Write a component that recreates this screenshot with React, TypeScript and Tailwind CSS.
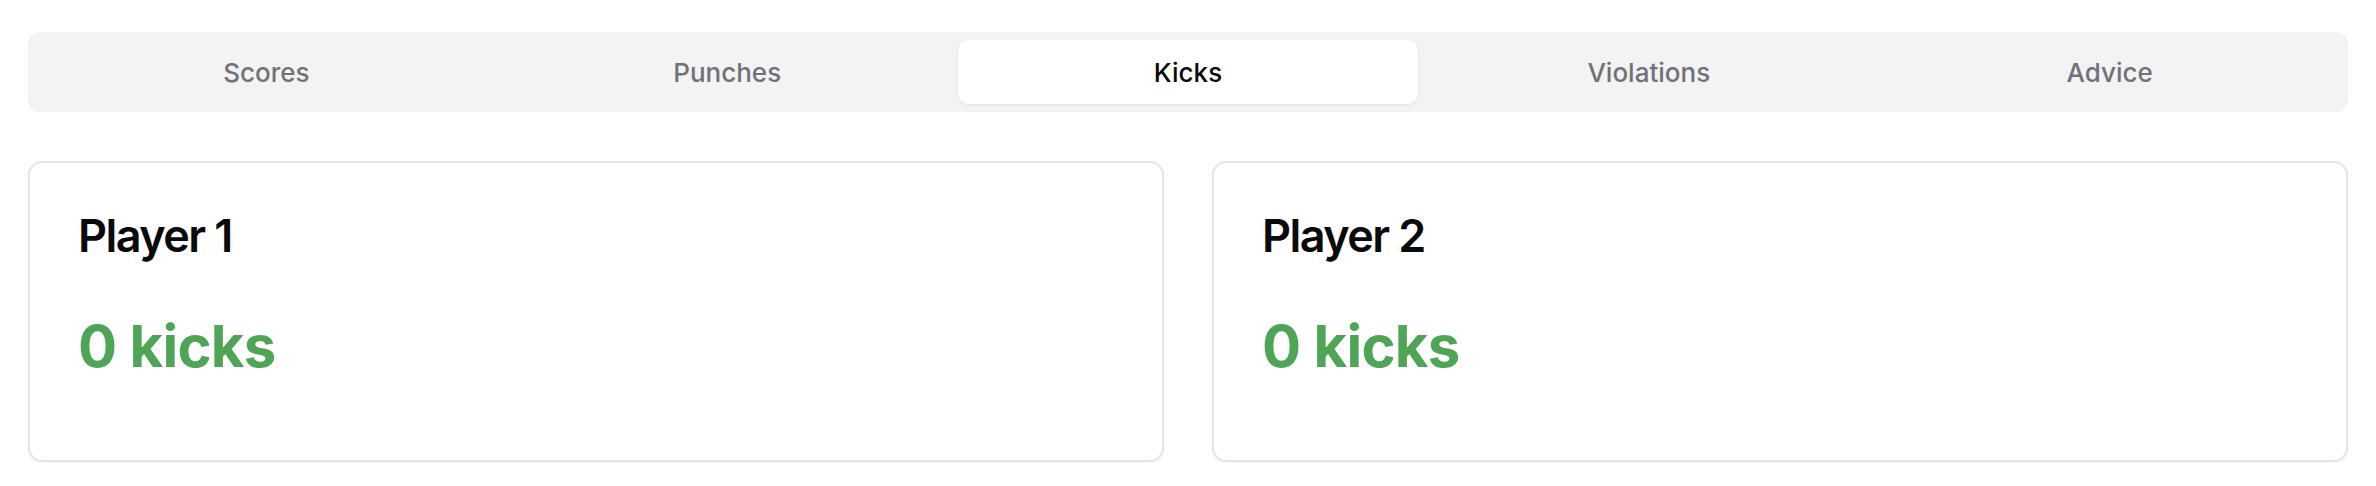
import { useState } from "react";

const tabs = ["Scores", "Punches", "Kicks", "Violations", "Advice"];

const players = [
  { name: "Player 1", kicks: 0 },
  { name: "Player 2", kicks: 0 },
];

export default function App() {
  const [active, setActive] = useState("Kicks");

  return (
    <div className="min-h-screen w-full bg-white px-7 pt-8 font-['Inter',sans-serif]">
      {/* Tab list */}
      <div className="grid h-20 grid-cols-5 rounded-xl bg-[#f3f3f3] p-2">
        {tabs.map((tab) => (
          <button
            key={tab}
            onClick={() => setActive(tab)}
            className={`flex items-center justify-center rounded-[10px] text-[26px] font-medium ${
              active === tab
                ? "bg-white text-[#0a0a0a] shadow-[0_1px_3px_rgba(0,0,0,0.08)]"
                : "text-[#71717a]"
            }`}
          >
            {tab}
          </button>
        ))}
      </div>

      {/* Player cards */}
      <div className="mt-[49px] grid grid-cols-2 gap-12">
        {players.map((p) => (
          <div
            key={p.name}
            className="h-[301px] rounded-[14px] border-2 border-[#e5e5e5] bg-white px-[48px] pt-[39px] shadow-[0_1px_2px_rgba(0,0,0,0.04)]"
          >
            <h2 className="text-[45px] font-semibold tracking-[-0.035em] text-[#0a0a0a]">
              {p.name}
            </h2>
            <p className="mt-[33px] text-[58px] font-bold tracking-[-0.012em] text-[#4ea556]">
              {p.kicks} kicks
            </p>
          </div>
        ))}
      </div>
    </div>
  );
}
